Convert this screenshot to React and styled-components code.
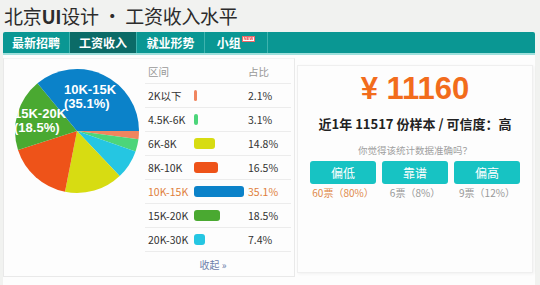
import React from "react";
import styled, { createGlobalStyle } from "styled-components";

const GlobalStyle = createGlobalStyle`
  html, body {
    margin: 0;
    padding: 0;
    background: #f1f2f0;
    font-family: "Noto Sans CJK SC", "Noto Sans", sans-serif;
  }
`;

const Page = styled.div`
  width: 540px;
  height: 285px;
  overflow: hidden;
  display: flex;
  flex-direction: column;
`;

const Title = styled.h1`
  margin: 0;
  padding: 6px 0 0 4px;
  height: 29px;
  box-sizing: border-box;
  font-size: 19px;
  line-height: 20px;
  font-weight: 400;
  color: #2c2c2c;
  letter-spacing: -0.3px;
  b {
    font-weight: 700;
  }
`;

const Nav = styled.nav`
  margin: 3px 5px 0 3px;
  height: 21px;
  display: flex;
  background: #0a9793;
  border-bottom: 2px solid #9fe0dc;
  border-radius: 2px 2px 0 0;
`;

const Tab = styled.div`
  width: ${p => p.$w || 65}px;
  display: flex;
  align-items: center;
  justify-content: center;
  font-size: 12px;
  font-weight: 700;
  color: #fff;
  background: ${p => (p.$active ? "#0b6b67" : "transparent")};
  border-right: 1px solid #3fb3ae;
`;

const NewBadge = styled.span`
  align-self: flex-start;
  margin: 4px 0 0 1px;
  font-size: 4px;
  line-height: 4px;
  padding: 0 1px;
  background: #fff;
  color: #e33;
  border: 1px solid #e66;
  font-family: "Liberation Sans", sans-serif;
  font-weight: 700;
`;

const Content = styled.div`
  flex: 1;
  margin: 0 5px 0 3px;
  background: #fdfdfd;
  display: flex;
  gap: 2px;
`;

const LeftPanel = styled.div`
  width: 292px;
  margin-top: 3px;
  height: 219px;
  box-sizing: border-box;
  border: 1px solid #e9e9e9;
  border-top-color: #f3f3f3;
  display: flex;
`;

const PieBox = styled.svg`
  width: 141px;
  height: 160px;
  flex: none;
  margin-top: -4px;
`;

const Table = styled.div`
  width: 146px;
  padding-top: 1px;
  display: flex;
  flex-direction: column;
  font-size: 10.5px;
  color: #333;
`;

const Row = styled.div`
  height: 24px;
  display: grid;
  grid-template-columns: 46px 54px 1fr;
  align-items: center;
  padding-left: 3px;
  border-bottom: 1px solid #ececec;
  box-sizing: border-box;
  color: ${p => (p.$active ? "#e07f3c" : p.$head ? "#999" : "#333")};
`;

const Bar = styled.div`
  height: 11px;
  border-radius: 3px;
  background: ${p => p.$color};
`;

const Collapse = styled.div`
  text-align: center;
  padding-top: 5px;
  padding-right: 10px;
  font-size: 10px;
  color: #6d80aa;
`;

const RightPanel = styled.div`
  width: 236px;
  margin-top: 10px;
  height: 208px;
  box-sizing: border-box;
  border: 1px solid #efefef;
  box-shadow: 1px 1px 3px rgba(0, 0, 0, 0.05);
  display: flex;
  flex-direction: column;
  align-items: center;
`;

const Price = styled.div`
  margin-top: 5px;
  font-family: "Liberation Sans", Arial, sans-serif;
  font-weight: 700;
  font-size: 31px;
  line-height: 36px;
  color: #f26c1c;
`;

const Samples = styled.div`
  margin-top: 8px;
  font-size: 13px;
  font-weight: 700;
  color: #222;
  line-height: 18px;
`;

const Question = styled.div`
  margin-top: 10px;
  font-size: 9.5px;
  color: #a0a0a0;
  line-height: 14px;
`;

const Buttons = styled.div`
  margin-top: 4px;
  display: grid;
  grid-template-columns: repeat(3, 66px);
  column-gap: 6px;
  row-gap: 1px;
`;

const VoteButton = styled.div`
  height: 23px;
  border-radius: 3px;
  background: #17c3c3;
  color: #fff;
  font-size: 12px;
  display: flex;
  align-items: center;
  justify-content: center;
`;

const Votes = styled.div`
  text-align: center;
  font-size: 10px;
  color: ${p => (p.$hot ? "#e0894a" : "#999")};
`;

const rows = [
  { label: "2K以下", pct: 2.1, color: "#f0855f" },
  { label: "4.5K-6K", pct: 3.1, color: "#4cd57a" },
  { label: "6K-8K", pct: 14.8, color: "#d7dc12" },
  { label: "8K-10K", pct: 16.5, color: "#ee5319" },
  { label: "10K-15K", pct: 35.1, color: "#0b82c9", active: true },
  { label: "15K-20K", pct: 18.5, color: "#4aa931" },
  { label: "20K-30K", pct: 7.4, color: "#25c6e2" },
];

// clockwise from 3 o'clock
const pieOrder = ["2K以下", "4.5K-6K", "20K-30K", "6K-8K", "8K-10K", "15K-20K", "10K-15K"];

const Pie = () => {
  const cx = 73;
  const cy = 76;
  const r = 62;
  const total = rows.reduce((s, d) => s + d.pct, 0);
  let a = 0;
  const slices = pieOrder.map(name => {
    const d = rows.find(x => x.label === name);
    const a0 = a;
    const a1 = a + (d.pct / total) * Math.PI * 2;
    a = a1;
    const x0 = cx + r * Math.cos(a0);
    const y0 = cy + r * Math.sin(a0);
    const x1 = cx + r * Math.cos(a1);
    const y1 = cy + r * Math.sin(a1);
    const large = a1 - a0 > Math.PI ? 1 : 0;
    return (
      <path
        key={name}
        d={`M${cx},${cy} L${x0},${y0} A${r},${r} 0 ${large} 1 ${x1},${y1} Z`}
        fill={d.color}
      />
    );
  });
  return (
    <PieBox viewBox="0 0 141 160">
      {slices}
      <g fill="#fff" fontFamily="Liberation Sans, Arial, sans-serif" fontWeight="700" fontSize="13">
        <text x="60" y="39">10K-15K</text>
        <text x="60" y="53">(35.1%)</text>
        <text x="10" y="63">15K-20K</text>
        <text x="10" y="77">(18.5%)</text>
      </g>
    </PieBox>
  );
};

const App = () => (
  <Page>
    <GlobalStyle />
    <Title>
      北京<b>UI</b>设计 • 工资收入水平
    </Title>
    <Nav>
      <Tab $w={66}>最新招聘</Tab>
      <Tab $w={66} $active>工资收入</Tab>
      <Tab $w={67}>就业形势</Tab>
      <Tab $w={62}>
        小组
        <NewBadge>NEW</NewBadge>
      </Tab>
    </Nav>
    <Content>
      <LeftPanel>
        <Pie />
        <Table>
          <Row $head>
            <span>区间</span>
            <span />
            <span>占比</span>
          </Row>
          {rows.map(d => (
            <Row key={d.label} $active={d.active}>
              <span>{d.label}</span>
              <Bar $color={d.color} style={{ width: `${Math.max(3, d.pct * 1.43)}px` }} />
              <span>{d.pct}%</span>
            </Row>
          ))}
          <Collapse>收起 »</Collapse>
        </Table>
      </LeftPanel>
      <RightPanel>
        <Price>¥ 11160</Price>
        <Samples>近1年 11517 份样本 / 可信度：高</Samples>
        <Question>你觉得该统计数据准确吗？</Question>
        <Buttons>
          <VoteButton>偏低</VoteButton>
          <VoteButton>靠谱</VoteButton>
          <VoteButton>偏高</VoteButton>
          <Votes $hot>60票（80%）</Votes>
          <Votes>6票（8%）</Votes>
          <Votes>9票（12%）</Votes>
        </Buttons>
      </RightPanel>
    </Content>
  </Page>
);

export default App;
